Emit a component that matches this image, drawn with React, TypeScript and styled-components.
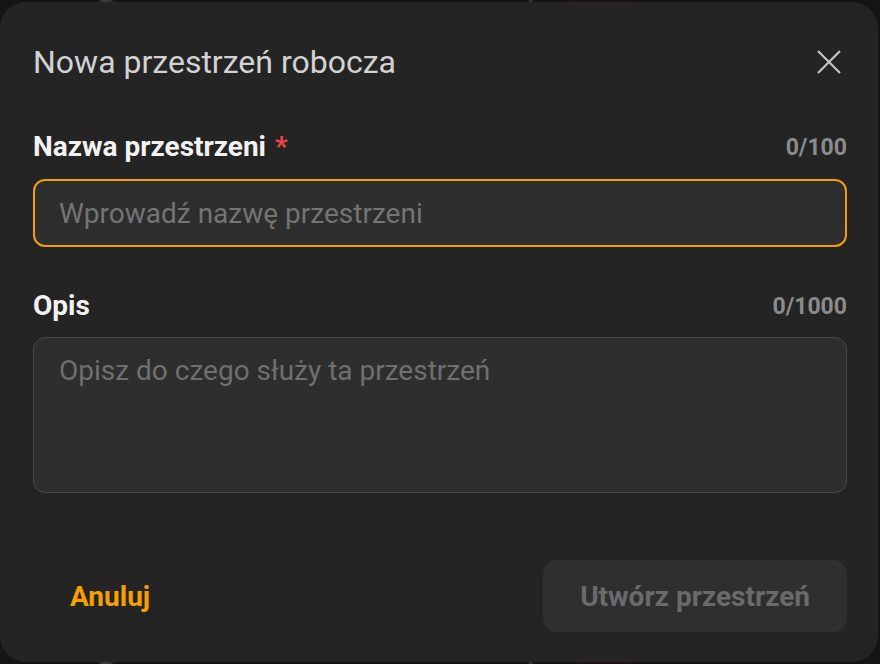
import React from "react";
import styled, { createGlobalStyle } from "styled-components";

const Global = createGlobalStyle`
  html, body { margin: 0; padding: 0; background: #131313; }
  body { font-family: Roboto, "Noto Sans", "Liberation Sans", sans-serif; }
  * { box-sizing: border-box; }
`;

const Backdrop = styled.div`
  width: 880px;
  height: 664px;
  padding-top: 2px;
  background:
    linear-gradient(90deg,
      #151515 0px, #151515 98px, #3a3a3a 102px, #3a3a3a 110px, #151515 114px,
      #151515 528px, #3a3a3a 530px, #151515 534px,
      #1a1315 568px, #1f1418 600px, #1a1315 640px, #151515 660px, #151515 880px);
  overflow: hidden;
`;

const Dialog = styled.div`
  width: 878px;
  height: 660px;
  background: #242424;
  border-radius: 26px;
  padding: 43px 31px 30px 33px;
  display: flex;
  flex-direction: column;
`;

const Header = styled.div`
  display: flex;
  align-items: center;
  justify-content: space-between;
  height: 34px;
`;

const Title = styled.h2`
  margin: 0;
  font-size: 32px;
  font-weight: 400;
  color: #d2d2d2;
  line-height: 34px;
`;

const CloseButton = styled.button`
  background: none;
  border: none;
  padding: 0;
  width: 24px;
  height: 24px;
  margin-right: 6px;
  display: flex;
  align-items: center;
  justify-content: center;
  color: #c4c4c4;
  cursor: pointer;
`;

const Field = styled.div<{ $top: number }>`
  margin-top: ${(p) => p.$top}px;
  display: flex;
  flex-direction: column;
`;

const LabelRow = styled.div`
  display: flex;
  align-items: center;
  justify-content: space-between;
  height: 28px;
`;

const Label = styled.label`
  font-size: 28px;
  font-weight: 700;
  color: #f2f2f2;
  line-height: 28px;
`;

const Required = styled.span`
  color: #ef4444;
  margin-left: 9px;
`;

const Counter = styled.span`
  font-size: 23px;
  font-weight: 700;
  color: #8b8b8b;
`;

const TextInput = styled.input`
  margin-top: 18px;
  height: 68px;
  width: 100%;
  background: #2e2e2e;
  border: 2px solid #f59e0b;
  border-radius: 12px;
  padding: 0 24px;
  font-family: inherit;
  font-size: 28px;
  color: #e0e0e0;
  outline: none;
  &::placeholder { color: #747474; }
`;

const TextArea = styled.textarea`
  margin-top: 17px;
  height: 156px;
  width: 100%;
  background: #2e2e2e;
  border: 1px solid #474747;
  border-radius: 12px;
  padding: 16px 25px;
  font-family: inherit;
  font-size: 28px;
  line-height: 34px;
  color: #e0e0e0;
  resize: none;
  outline: none;
  &::placeholder { color: #6f6f6f; }
`;

const Footer = styled.div`
  margin-top: auto;
  display: flex;
  align-items: center;
  justify-content: space-between;
`;

const TextButton = styled.button`
  background: none;
  border: none;
  padding: 0 37px;
  height: 72px;
  font-family: inherit;
  font-size: 28px;
  font-weight: 700;
  color: #f5a000;
  cursor: pointer;
`;

const PrimaryButton = styled.button`
  height: 72px;
  padding: 0 37px;
  background: #2f2f2f;
  border: none;
  border-radius: 14px;
  font-family: inherit;
  font-size: 28px;
  font-weight: 700;
  color: #6a6a6a;
  cursor: not-allowed;
`;

export default function App() {
  return (
    <>
      <Global />
      <Backdrop>
        <Dialog>
          <Header>
            <Title>Nowa przestrzeń robocza</Title>
            <CloseButton aria-label="Zamknij">
              <svg width="24" height="24" viewBox="0 0 24 24" fill="none" stroke="currentColor" strokeWidth="2.2" strokeLinecap="butt">
                <path d="M1 1 L23 23 M23 1 L1 23" />
              </svg>
            </CloseButton>
          </Header>
          <Field $top={54}>
            <LabelRow>
              <Label>
                Nazwa przestrzeni<Required>*</Required>
              </Label>
              <Counter>0/100</Counter>
            </LabelRow>
            <TextInput placeholder="Wprowadź nazwę przestrzeni" />
          </Field>
          <Field $top={45}>
            <LabelRow>
              <Label>Opis</Label>
              <Counter>0/1000</Counter>
            </LabelRow>
            <TextArea placeholder="Opisz do czego służy ta przestrzeń" />
          </Field>
          <Footer>
            <TextButton>Anuluj</TextButton>
            <PrimaryButton disabled>Utwórz przestrzeń</PrimaryButton>
          </Footer>
        </Dialog>
      </Backdrop>
    </>
  );
}
